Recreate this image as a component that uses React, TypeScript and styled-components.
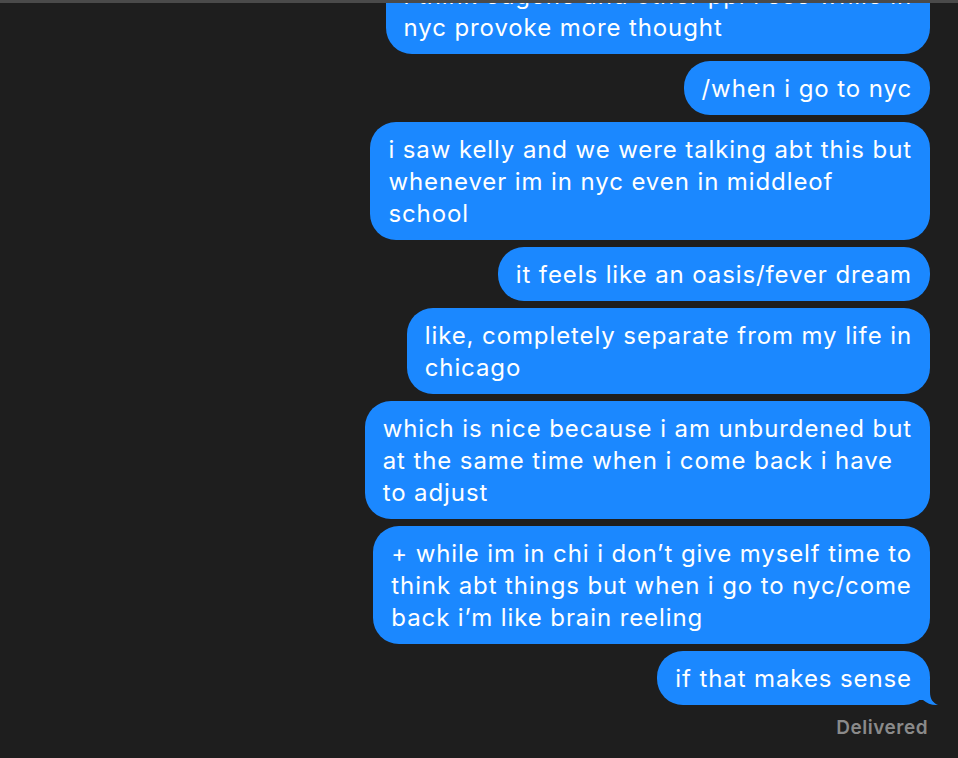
import React from "react";
import styled, { createGlobalStyle } from "styled-components";

const GlobalStyle = createGlobalStyle`
  html, body {
    margin: 0;
    padding: 0;
    background: #1e1e1e;
  }
`;

const Window = styled.div`
  height: 758px;
  display: flex;
  flex-direction: column;
  background: #1e1e1e;
  overflow: hidden;
`;

const TopBar = styled.div`
  height: 3px;
  flex-shrink: 0;
  background: #4a4a4a;
`;

const Transcript = styled.div`
  flex: 1;
  min-height: 0;
  overflow: hidden;
  display: flex;
  flex-direction: column;
  justify-content: flex-end;
  align-items: flex-end;
  gap: 7px;
  padding: 0 28px 19px 0;
`;

const Bubble = styled.div`
  position: relative;
  flex-shrink: 0;
  box-sizing: border-box;
  padding: 12px 18px 10px;
  border-radius: 26px;
  background: #1b88ff;
  color: #ffffff;
  font-family: Inter, "Noto Sans", sans-serif;
  font-size: 24px;
  line-height: 32px;
  letter-spacing: 0.9px;
  white-space: pre-line;
`;

const Tail = styled.svg`
  position: absolute;
  right: -10px;
  bottom: -1px;
  width: 26px;
  height: 26px;
`;

const Status = styled.div`
  flex-shrink: 0;
  margin-top: 5px;
  margin-right: 2px;
  font-family: Inter, "Noto Sans", sans-serif;
  font-size: 19px;
  font-weight: 600;
  line-height: 22px;
  letter-spacing: 0.5px;
  color: #8a8a8a;
`;

const messages = [
  "i think eugene and other ppl i see while in\nnyc provoke more thought",
  "/when i go to nyc",
  "i saw kelly and we were talking abt this but\nwhenever im in nyc even in middleof\nschool",
  "it feels like an oasis/fever dream",
  "like, completely separate from my life in\nchicago",
  "which is nice because i am unburdened but\nat the same time when i come back i have\nto adjust",
  "+ while im in chi i don\u2019t give myself time to\nthink abt things but when i go to nyc/come\nback i\u2019m like brain reeling",
  "if that makes sense",
];

export default function App() {
  return (
    <>
      <GlobalStyle />
      <Window>
        <TopBar />
        <Transcript>
          {messages.map((text, i) => {
            const last = i === messages.length - 1;
            return (
              <Bubble key={i}>
                {text}
                {last && (
                  <Tail viewBox="0 0 26 26">
                    <path
                      d="M0 0 H16 V12 C16 19 19 23 24 25 C18 25.5 13 23.5 9 20 L0 20 Z"
                      fill="#1b88ff"
                    />
                  </Tail>
                )}
              </Bubble>
            );
          })}
          <Status>Delivered</Status>
        </Transcript>
      </Window>
    </>
  );
}
